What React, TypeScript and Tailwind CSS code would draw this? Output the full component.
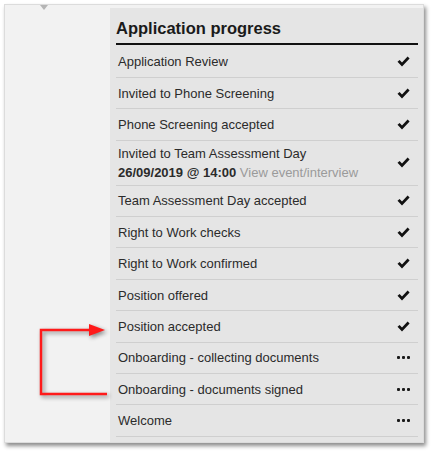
type Step = {
  label: string;
  done: boolean;
  extra?: { date: string; link: string };
};

const steps: Step[] = [
  { label: 'Application Review', done: true },
  { label: 'Invited to Phone Screening', done: true },
  { label: 'Phone Screening accepted', done: true },
  {
    label: 'Invited to Team Assessment Day',
    done: true,
    extra: { date: '26/09/2019 @ 14:00', link: 'View event/interview' },
  },
  { label: 'Team Assessment Day accepted', done: true },
  { label: 'Right to Work checks', done: true },
  { label: 'Right to Work confirmed', done: true },
  { label: 'Position offered', done: true },
  { label: 'Position accepted', done: true },
  { label: 'Onboarding - collecting documents', done: false },
  { label: 'Onboarding - documents signed', done: false },
  { label: 'Welcome', done: false },
];

const Tick = () => (
  <svg width="13" height="11" viewBox="0 0 13 11">
    <path d="M0.5 5.8 L2.6 3.9 L5 6.4 L10.6 0.5 L12.6 2.4 L5 10.4 Z" fill="#111" />
  </svg>
);

const Dots = () => (
  <div className="flex items-center gap-[1.5px]">
    <span className="w-[3.5px] h-[3px] bg-[#1a1a1a] rounded-[1px]"></span>
    <span className="w-[3.5px] h-[3px] bg-[#1a1a1a] rounded-[1px]"></span>
    <span className="w-[3.5px] h-[3px] bg-[#1a1a1a] rounded-[1px]"></span>
  </div>
);

const App = () => {
  return (
    <div className="w-[434px] h-[452px] bg-white pt-[4px] pl-[4px] font-['Liberation_Sans',Arial,sans-serif]">
      <div className="relative w-[420px] h-[439px] bg-[#f2f2f2] border border-[#dcdcdc] shadow-[2px_3px_4px_rgba(0,0,0,0.45)] flex">
        {/* tiny notch at top */}
        <div className="absolute left-[35px] top-0 w-0 h-0 border-l-[4px] border-r-[4px] border-t-[5px] border-l-transparent border-r-transparent border-t-[#b5b5b5]"></div>

        {/* red arrow */}
        <svg
          className="absolute left-[28px] top-[312px] drop-shadow-[2px_2px_2px_rgba(0,0,0,0.45)]"
          width="80"
          height="84"
          viewBox="0 0 80 84"
        >
          <path d="M74 77 H8 V13 H58" fill="none" stroke="#ff1a1a" strokeWidth="2.5" />
          <polygon points="56,7 72,13 56,19" fill="#ff1a1a" />
        </svg>

        <div className="w-[105px] shrink-0"></div>

        <div className="flex-1 mt-[3px] bg-[#e5e5e5] pl-[6px] pr-[5px]">
          <h2 className="text-[16.5px] font-bold text-[#1a1a1a] pt-[11px] pb-[6px] leading-[18px] border-b-2 border-[#111]">
            Application progress
          </h2>
          <div className="pt-[1.5px]">
            {steps.map((step, idx) => (
              <div
                key={idx}
                className={`flex items-center justify-between border-b border-[#cfcfcf] pl-[2px] pr-[8px] ${
                  step.extra ? 'h-[45px]' : 'h-[31.4px]'
                }`}
              >
                <div className="text-[13px] leading-[19px] text-[#2b2b2b]">
                  <div>{step.label}</div>
                  {step.extra && (
                    <div>
                      <span className="font-bold">{step.extra.date}</span>{' '}
                      <span className="text-[#9a9a9a]">{step.extra.link}</span>
                    </div>
                  )}
                </div>
                {step.done ? <Tick /> : <Dots />}
              </div>
            ))}
          </div>
        </div>
      </div>
    </div>
  );
};

export default App;
